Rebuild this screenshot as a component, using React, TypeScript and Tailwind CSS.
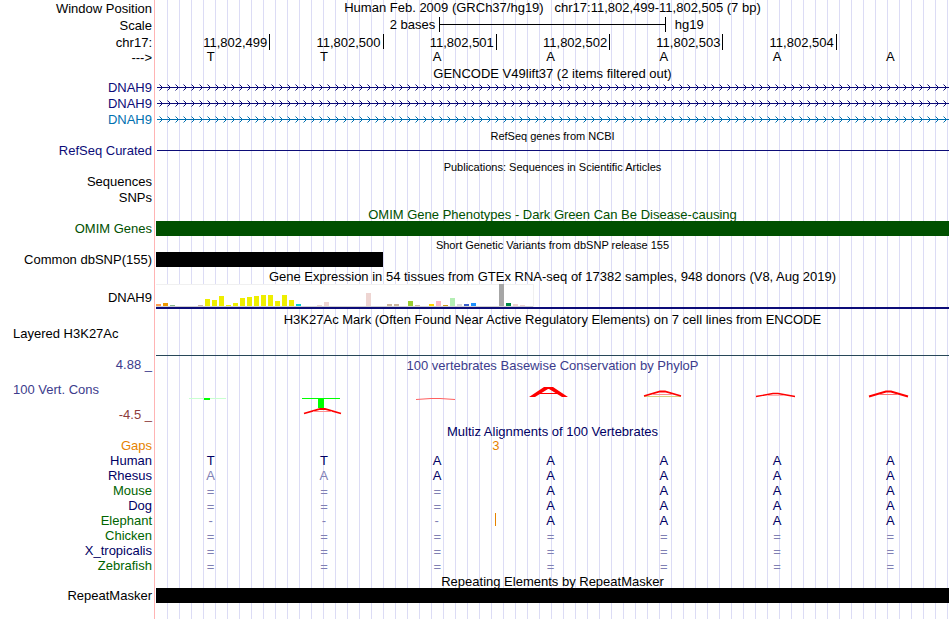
import type { ReactNode } from "react";

type RowProps = {
  height?: string;
  label?: ReactNode;
  labelClass?: string;
  contentClass?: string;
  children?: ReactNode;
};

function Row({ height = "h-[15px]", label, labelClass = "text-black", contentClass = "", children }: RowProps) {
  return (
    <div className={`grid grid-cols-[155px_minmax(0,1fr)] ${height}`}>
      <div className={`border-r border-[#ffb4b4] pr-[2px] text-right ${labelClass}`}>{label}</div>
      <div
        className={`ml-px bg-[repeating-linear-gradient(to_right,transparent_0px,transparent_11px,#dcdcf5_11px,#dcdcf5_12px)] ${contentClass}`}
      >
        {children}
      </div>
    </div>
  );
}

type TitleProps = { children: ReactNode; height?: string; className?: string };

function Title({ children, height = "h-4", className = "pt-px text-black" }: TitleProps) {
  return (
    <Row height={height} contentClass={`text-center ${className}`}>
      <h2>{children}</h2>
    </Row>
  );
}

function GeneArrows({ id, label, labelClass, stroke }: { id: string; label: string; labelClass: string; stroke: string }) {
  return (
    <Row height="h-4" label={label} labelClass={labelClass}>
      <svg className={`block h-[15px] w-full ${stroke}`} fill="none" stroke="currentColor">
        <defs>
          <pattern id={id} x="2" width="8" height="15" patternUnits="userSpaceOnUse">
            <path d="M1.5 4.5L4.5 7.5L1.5 10.5" strokeWidth="1" />
          </pattern>
        </defs>
        <rect x="2" width="100%" height="15" fill={`url(#${id})`} stroke="none" />
        <line x1="1" y1="7.5" x2="100%" y2="7.5" shapeRendering="crispEdges" />
      </svg>
    </Row>
  );
}

const positions = ["11,802,499", "11,802,500", "11,802,501", "11,802,502", "11,802,503", "11,802,504", ""];

const tissues: [number, number, string][] = [
  [0, 2, "#ff9d4d"], [1, 3, "#ee9a00"], [2, 1, "#8fbc8f"], [6, 1, "#cdb4a5"],
  [7, 7, "#eeee00"], [8, 6, "#eeee00"], [9, 10, "#eeee00"], [10, 1, "#eeee00"],
  [11, 3, "#eeee00"], [12, 8, "#eeee00"], [13, 9, "#eeee00"], [14, 10, "#eeee00"],
  [15, 11, "#eeee00"], [16, 11, "#eeee00"], [17, 5, "#eeee00"], [18, 11, "#eeee00"],
  [19, 6, "#eeee00"], [20, 2, "#00cdcd"], [23, 1, "#eed5d2"], [24, 4, "#eed5d2"],
  [30, 13, "#eed5d2"], [33, 2, "#cdb79e"], [34, 2, "#cdb79e"], [36, 5, "#9acd32"],
  [37, 1, "#cdb79e"], [39, 2, "#ffd700"], [40, 5, "#ffb6c1"], [41, 1, "#cd9b1d"],
  [42, 8, "#b4eeb4"], [43, 2, "#d9d9d9"], [44, 2, "#3a5fcd"], [45, 3, "#1e90ff"],
  [49, 22, "#a6a6a6"], [50, 3, "#008b45"], [51, 2, "#eed5d2"], [52, 1, "#eed5d2"],
];

const species = [
  { name: "Human", color: "text-[#000064]", bases: "TTAAAAA", faint: 0 },
  { name: "Rhesus", color: "text-[#000064]", bases: "AAAAAAA", faint: 2 },
  { name: "Mouse", color: "text-[#006400]", bases: "===AAAA", faint: 3 },
  { name: "Dog", color: "text-[#000064]", bases: "===AAAA", faint: 3 },
  { name: "Elephant", color: "text-[#006400]", bases: "---AAAA", faint: 3, insert: true },
  { name: "Chicken", color: "text-[#006400]", bases: "=======", faint: 7 },
  { name: "X_tropicalis", color: "text-[#000064]", bases: "=======", faint: 7 },
  { name: "Zebrafish", color: "text-[#006400]", bases: "=======", faint: 7 },
];

// Conservation marks, one per base, on a 48 x 51 canvas.
const conservation: ReactNode[] = [
  <g key="0" shapeRendering="crispEdges">
    <rect x="4" y="27" width="37" height="1" fill="#c8ffd0" />
    <rect x="19" y="27" width="6" height="2" fill="#00ff00" />
  </g>,
  <g key="1">
    <g fill="#00ff00" shapeRendering="crispEdges">
      <rect x="4" y="27" width="38" height="1" />
      <rect x="20" y="27" width="6" height="10" />
    </g>
    <path d="M6 42.5L22 38H27L43 42.5" fill="none" stroke="#ff0000" strokeWidth="1.8" />
    <path d="M15 40.5H34" stroke="#ff9090" />
  </g>,
  <path key="2" d="M5 28.5L20 27.5H29L44 28.5" fill="none" stroke="#ff6060" strokeWidth="1" />,
  <g key="3">
    <path d="M5 26L20 16H29L44 26H38L25 18H24L11 26Z" fill="#ff0000" />
    <path d="M16 22.5H33" stroke="#ff0000" />
  </g>,
  <g key="4">
    <path d="M6 25.5H43" stroke="#d8d080" />
    <path d="M6 25L22 20.5H27L43 25" fill="none" stroke="#ff0000" strokeWidth="1.8" />
    <path d="M15 23.5H34" stroke="#ff9090" />
  </g>,
  <g key="5">
    <path d="M5 25.5L22 22.5H27L44 25.5" fill="none" stroke="#ff0000" strokeWidth="1.4" />
    <path d="M16 24.5H33" stroke="#ffb0b0" />
  </g>,
  <g key="6">
    <path d="M5 25.5L22 20.5H27L44 25.5" fill="none" stroke="#ff0000" strokeWidth="2" />
    <path d="M15 23.5H34" stroke="#ff7070" />
  </g>,
];

export default function App() {
  return (
    <main className="mr-px bg-white font-['Liberation_Sans',Arial,sans-serif] text-[13px] leading-[15px] whitespace-nowrap text-black">
      <Row height="h-[17px]" label="Window Position" labelClass="pt-px" contentClass="text-center">
        <h1 className="whitespace-pre">{"Human Feb. 2009 (GRCh37/hg19)   chr17:11,802,499-11,802,505 (7 bp)"}</h1>
      </Row>
      <Row height="h-[17px]" label="Scale" labelClass="pt-px" contentClass="grid grid-cols-[5fr_4fr_5fr]">
        <span className="pr-1 text-right">2 bases</span>
        <span className="flex h-[15px] items-center border-x border-black">
          <span className="h-px w-full bg-black" />
        </span>
        <span className="pl-[9px]">hg19</span>
      </Row>
      <Row label="chr17:" labelClass="pt-px" contentClass="grid grid-cols-7">
        {positions.map((position, i) => (
          <span key={i} className={`pt-px pr-[2px] text-right ${i > 0 ? "border-l border-black" : ""}`}>
            {position}
          </span>
        ))}
      </Row>
      <Row label="--->" labelClass="pt-px" contentClass="grid grid-cols-7">
        {"TTAAAAA".split("").map((base, i) => (
          <span key={i} className="pr-1 text-center">{base}</span>
        ))}
      </Row>
      <Title className="pt-[2px]">GENCODE V49lift37 (2 items filtered out)</Title>
      <GeneArrows id="gene-a" label="DNAH9" labelClass="text-[#0c0c78]" stroke="text-[#0c0c78]" />
      <GeneArrows id="gene-b" label="DNAH9" labelClass="text-[#0c0c78]" stroke="text-[#0c0c78]" />
      <GeneArrows id="gene-c" label="DNAH9" labelClass="text-[#0070b0]" stroke="text-[#0070b0]" />

      <Title height="h-[15px]" className="pt-px text-[11px]">RefSeq genes from NCBI</Title>
      <Row label="RefSeq Curated" labelClass="text-[#0c0c78]">
        <div className="ml-px flex h-full items-center">
          <span className="h-px w-full bg-[#0c0c78]" />
        </div>
      </Row>
      <Title className="pt-[2px] text-[11px]">Publications: Sequences in Scientific Articles</Title>
      <Row height="h-4" label="Sequences" />
      <Row height="h-4" label="SNPs" />

      <Title height="h-[15px]" className="pt-px text-[#005000]">
        OMIM Gene Phenotypes - Dark Green Can Be Disease-causing
      </Title>
      <Row label="OMIM Genes" labelClass="text-[#005000]">
        <div className="h-full bg-[#005000]" />
      </Row>
      <Title className="pt-[2px] text-[11px]">Short Genetic Variants from dbSNP release 155</Title>
      <Row label="Common dbSNP(155)">
        <div className="h-full w-2/7 bg-black" />
      </Row>

      <Title height="h-[17px]" className="pt-[2px]">
        Gene Expression in 54 tissues from GTEx RNA-seq of 17382 samples, 948 donors (V8, Aug 2019)
      </Title>
      <Row height="h-[25px]" label="DNAH9" labelClass="pt-[6px]">
        <div className="h-full border-b-2 border-[#0c0c78]">
          <svg className="block h-[23px] w-[378px]" shapeRendering="crispEdges">
            <rect width="378" height="23" fill="#f0f0f0" />
            <rect y="1" width="377" height="21" fill="#ffffff" />
            <rect y="22" width="377" height="1" fill="#d0d0d0" />
            {tissues.map(([slot, size, color]) => (
              <rect key={slot} x={slot * 7} y={22 - size} width="5" height={size} fill={color} />
            ))}
          </svg>
        </div>
      </Row>

      <Title height="h-[17px]" className="pt-[3px]">
        H3K27Ac Mark (Often Found Near Active Regulatory Elements) on 7 cell lines from ENCODE
      </Title>
      <Row height="h-[30px]" label={<p className="pl-[13px] text-left">Layered H3K27Ac</p>}>
        <div className="h-full border-b border-[#284858]" />
      </Row>

      <Row label="4.88 _" labelClass="pt-px text-[#3c3c8c]" contentClass="pt-[2px] text-center text-[#3c3c8c]">
        <h2>100 vertebrates Basewise Conservation by PhyloP</h2>
      </Row>
      <Row
        height="h-[51px]"
        label={
          <>
            <p className="pt-[11px] pl-[13px] text-left text-[#3c3c8c]">100 Vert. Cons</p>
            <p className="pt-[10px] text-[#8c3c3c]">-4.5 _</p>
          </>
        }
        contentClass="grid grid-cols-7"
      >
        {conservation.map((mark, i) => (
          <span key={i} className="flex justify-center pr-2">
            <svg className="h-[51px] w-12 shrink-0" viewBox="0 0 48 51">{mark}</svg>
          </span>
        ))}
      </Row>

      <Title className="pt-[2px] text-[#000064]">Multiz Alignments of 100 Vertebrates</Title>
      <Row label="Gaps" labelClass="text-[#e68200]" contentClass="grid grid-cols-7 text-center text-[#e68200]">
        <span className="col-span-2 col-start-3">3</span>
      </Row>
      {species.map(({ name, color, bases, faint, insert }) => (
        <Row key={name} label={name} labelClass={color} contentClass="grid grid-cols-7 text-center">
          {bases.split("").map((base, i) => (
            <span
              key={i}
              className={`pr-1 ${i < faint ? "text-[#8080b4]" : "text-[#000064]"} ${base === "=" ? "pt-px" : ""} ${insert && i === 2 ? "h-[13px] border-r border-[#e68200]" : ""}`}
            >
              {base}
            </span>
          ))}
        </Row>
      ))}

      <Title height="h-[15px]">Repeating Elements by RepeatMasker</Title>
      <Row label="RepeatMasker">
        <div className="h-full bg-black" />
      </Row>
      <Row height="h-4" />
    </main>
  );
}
